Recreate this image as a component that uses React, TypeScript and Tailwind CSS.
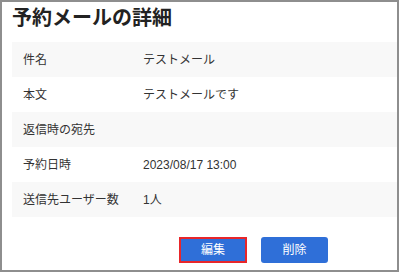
import React from 'react';

const rows = [
  { label: '件名', value: 'テストメール' },
  { label: '本文', value: 'テストメールです' },
  { label: '返信時の宛先', value: '' },
  { label: '予約日時', value: '2023/08/17 13:00' },
  { label: '送信先ユーザー数', value: '1人' },
];

export default function App() {
  return (
    <div
      className="w-[399px] h-[272px] border-2 border-[#8e8e8e] bg-white overflow-hidden"
      style={{ fontFamily: '"Liberation Sans", "Noto Sans CJK JP", sans-serif' }}
    >
      <h1 className="pl-[10px] pt-[2px] h-[40px] text-[20px] leading-[28px] font-bold text-[#222]">
        予約メールの詳細
      </h1>

      {/* Detail rows */}
      <div className="ml-[10px]">
        {rows.map((row, i) => (
          <div
            key={row.label}
            className={`flex items-center h-[35px] text-[12px] text-[#333] ${
              i % 2 === 0 ? 'bg-[#f8f8f8]' : 'bg-white'
            }`}
          >
            <div className="w-[131px] pl-[11px]">{row.label}</div>
            <div>{row.value}</div>
          </div>
        ))}
      </div>

      {/* Actions */}
      <div className="flex pl-[177px] gap-[14px] mt-[20px]">
        <button className="w-[68px] h-[26px] bg-[#2f6fd8] text-white text-[12px] border-2 border-[#e8262a]">
          編集
        </button>
        <button className="w-[67px] h-[26px] bg-[#2f6fd8] text-white text-[12px] rounded-[3px]">
          削除
        </button>
      </div>
    </div>
  );
}
